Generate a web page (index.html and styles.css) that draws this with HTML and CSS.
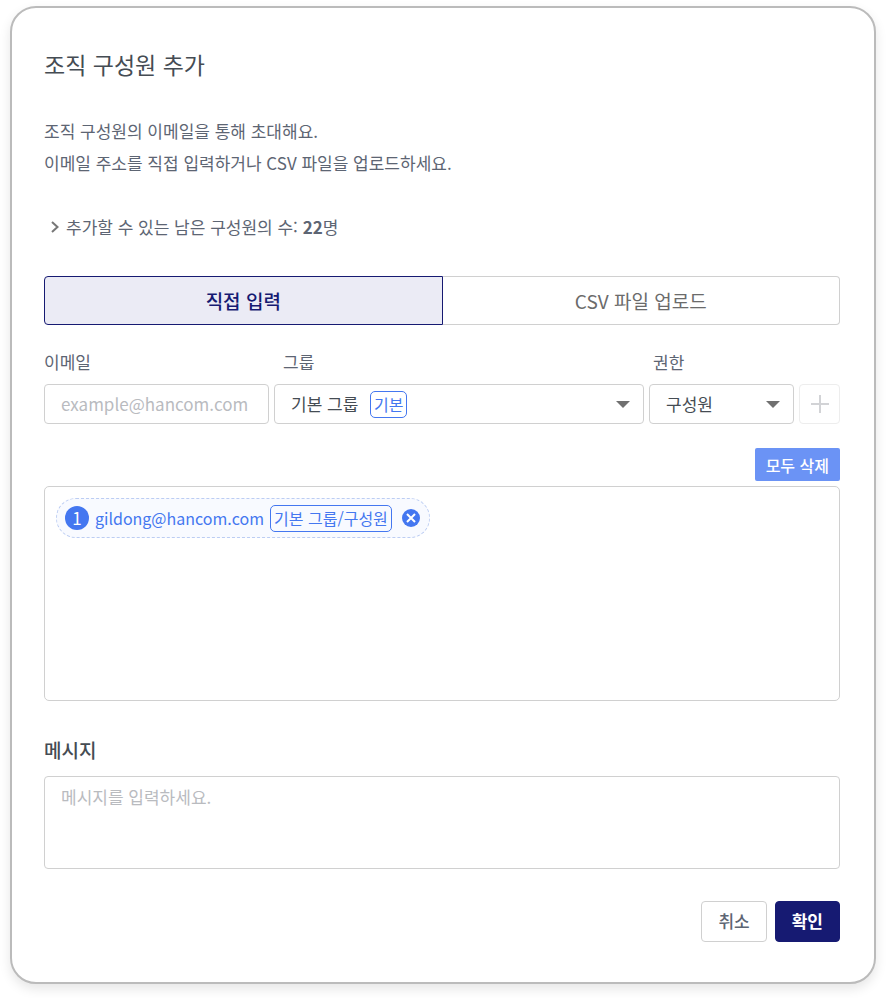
FILE: index.html
```html
<!DOCTYPE html>
<html lang="ko">
<head>
    <meta charset="UTF-8">
    <meta name="viewport" content="width=device-width, initial-scale=1.0">
    <title>조직 구성원 추가</title>
    <link rel="stylesheet" href="styles.css">
</head>
<body>
    <form class="modal">
        <h1>조직 구성원 추가</h1>

        <p class="description">
            조직 구성원의 이메일을 통해 초대해요.<br>
            이메일 주소를 직접 입력하거나 CSV 파일을 업로드하세요.
        </p>

        <p class="remaining">
            <svg class="chevron" viewBox="0 0 8 12" aria-hidden="true"><path d="M1 1l5.500 5L1 11"/></svg>
            <span>추가할 수 있는 남은 구성원의 수: <strong>22</strong>명</span>
        </p>

        <div class="tabs">
            <button type="button" class="tab active">직접 입력</button>
            <button type="button" class="tab">CSV 파일 업로드</button>
        </div>

        <div class="invite-row">
            <div class="field">
                <label for="email">이메일</label>
                <input type="email" id="email" class="form-control" placeholder="example@hancom.com">
            </div>
            <div class="field field-group">
                <label for="group">그룹</label>
                <div class="select-wrap">
                    <select id="group" class="form-control">
                        <option>기본 그룹</option>
                    </select>
                    <span class="badge select-badge">기본</span>
                    <svg class="arrow" viewBox="0 0 14 7" aria-hidden="true"><path d="M0 0h14L7 7z"/></svg>
                </div>
            </div>
            <div class="field field-role">
                <label for="role">권한</label>
                <div class="select-wrap">
                    <select id="role" class="form-control">
                        <option>구성원</option>
                    </select>
                    <svg class="arrow" viewBox="0 0 14 7" aria-hidden="true"><path d="M0 0h14L7 7z"/></svg>
                </div>
            </div>
            <button type="button" class="btn-add" aria-label="추가" disabled>
                <svg viewBox="0 0 20 20" aria-hidden="true"><path d="M10 1v18M1 10h18"/></svg>
            </button>
        </div>

        <div class="list-actions">
            <button type="button" class="btn-clear">모두 삭제</button>
        </div>

        <div class="member-list">
            <div class="chip">
                <span class="chip-number">1</span>
                <span class="chip-email">gildong@hancom.com</span>
                <span class="badge">기본 그룹/구성원</span>
                <button type="button" class="chip-remove" aria-label="삭제">
                    <svg viewBox="0 0 18 18" aria-hidden="true"><path d="M5 5l8 8M13 5l-8 8"/></svg>
                </button>
            </div>
        </div>

        <label for="message" class="message-label">메시지</label>
        <textarea id="message" class="form-control message" placeholder="메시지를 입력하세요."></textarea>

        <div class="footer">
            <button type="button" class="btn btn-cancel">취소</button>
            <button type="submit" class="btn btn-submit">확인</button>
        </div>
    </form>
</body>
</html>
```
FILE: styles.css
```css
:root {
    --primary-color: #161a72;
    --primary-light: #ebebf5;
    --blue: #4477f0;
    --text-color: #454c53;
    --text-sub: #5d6573;
    --placeholder: #b9bbbf;
    --border-color: #d0d0d0;
}

* {
    box-sizing: border-box;
    margin: 0;
    padding: 0;
    font-family: "Noto Sans CJK KR", sans-serif;
}

body {
    background-color: #fff;
    color: var(--text-color);
    padding: 6px 11px 14px 10px;
}

button {
    cursor: pointer;
}

.modal {
    background-color: #fff;
    border: 2px solid #bbb;
    border-radius: 26px;
    box-shadow: 0 5px 12px rgba(0, 0, 0, 0.1);
    padding: 40px 34px 40px 32px;
}

h1 {
    font-size: 23px;
    font-weight: 400;
    line-height: 32px;
    margin-bottom: 35px;
}

.description,
.remaining {
    color: var(--text-sub);
    font-size: 17px;
    line-height: 32px;
    margin-bottom: 32px;
}

.remaining {
    display: flex;
    align-items: center;
    gap: 7px;
    padding-left: 7px;
}

.chevron {
    width: 8px;
    height: 12px;
    fill: none;
    stroke: #777;
    stroke-width: 2;
}

.tabs {
    display: flex;
    margin-top: 33px;
}

.tab {
    flex: 1;
    height: 49px;
    background-color: #fff;
    border: 1px solid var(--border-color);
    border-left: none;
    border-radius: 0 4px 4px 0;
    color: #6b6b6b;
    font-size: 19px;
}

.tab.active {
    background-color: var(--primary-light);
    border: 1px solid var(--primary-color);
    border-radius: 4px 0 0 4px;
    color: var(--primary-color);
    font-weight: 500;
}

/* Строка ввода */
.invite-row {
    display: grid;
    grid-template-columns: 225fr 370fr 145fr 41px;
    gap: 5px;
    align-items: end;
    margin-top: 23px;
}

.field {
    min-width: 0;
}

.field label {
    display: block;
    color: var(--text-sub);
    font-size: 17px;
    line-height: 28px;
    margin-bottom: 8px;
}

.field-group label {
    padding-left: 9px;
}

.field-role label {
    padding-left: 4px;
}

.form-control {
    display: block;
    width: 100%;
    height: 40px;
    padding: 0 16px 2px;
    background-color: #fff;
    border: 1px solid var(--border-color);
    border-radius: 4px;
    color: var(--text-color);
    font-size: 17px;
    outline: none;
    appearance: none;
}

.form-control:focus {
    border-color: var(--blue);
}

.form-control::placeholder {
    color: var(--placeholder);
}

.select-wrap {
    position: relative;
}

.arrow {
    position: absolute;
    right: 14px;
    top: 17px;
    width: 14px;
    height: 7px;
    fill: #707070;
    pointer-events: none;
}

.badge {
    border: 1px solid var(--blue);
    border-radius: 5px;
    color: var(--blue);
    font-size: 16px;
    line-height: 25px;
    padding: 0 3px;
    white-space: nowrap;
}

.select-badge {
    position: absolute;
    left: 96px;
    top: 7px;
    pointer-events: none;
}

.btn-add {
    display: flex;
    align-items: center;
    justify-content: center;
    height: 40px;
    background-color: #fff;
    border: 1px solid #ededed;
    border-radius: 4px;
}

.btn-add svg {
    width: 20px;
    height: 20px;
    stroke: #d2d3d6;
    stroke-width: 2;
}

.list-actions {
    display: flex;
    justify-content: flex-end;
    margin: 24px 0 5px;
}

.btn-clear {
    height: 33px;
    padding: 0 11px;
    background-color: #6b93f5;
    border: none;
    border-radius: 2px;
    color: #fff;
    font-size: 16px;
    font-weight: 500;
}

.member-list {
    min-height: 215px;
    padding: 11px;
    border: 1px solid var(--border-color);
    border-radius: 5px;
}

.chip {
    display: inline-flex;
    align-items: center;
    height: 40px;
    padding: 0 9px 0 8px;
    gap: 6px;
    background-color: #f8faff;
    border: 1px dashed #bccdf3;
    border-radius: 20px;
    color: var(--blue);
    font-size: 16px;
}

.chip-number {
    width: 24px;
    height: 24px;
    background-color: var(--blue);
    border-radius: 50%;
    color: #fff;
    font-size: 17px;
    line-height: 24px;
    text-align: center;
}

.chip-remove {
    width: 18px;
    height: 18px;
    margin-left: 4px;
    background-color: var(--blue);
    border: none;
    border-radius: 50%;
}

.chip-remove svg {
    display: block;
    stroke: #fff;
    stroke-width: 2;
}

.message-label {
    display: block;
    margin: 35px 0 12px;
    font-size: 19px;
    font-weight: 500;
    line-height: 28px;
}

.form-control.message {
    height: 93px;
    padding: 6px 16px;
    line-height: 28px;
    resize: none;
}

.footer {
    display: flex;
    justify-content: flex-end;
    gap: 8px;
    margin-top: 32px;
}

.btn {
    height: 41px;
    padding: 0 16px 2px;
    border: 1px solid var(--border-color);
    border-radius: 4px;
    font-size: 17px;
}

.btn-cancel {
    background-color: #fff;
    color: var(--text-sub);
    font-weight: 500;
}

.btn-submit {
    background-color: var(--primary-color);
    border-color: var(--primary-color);
    color: #fff;
    font-weight: 700;
}
```
